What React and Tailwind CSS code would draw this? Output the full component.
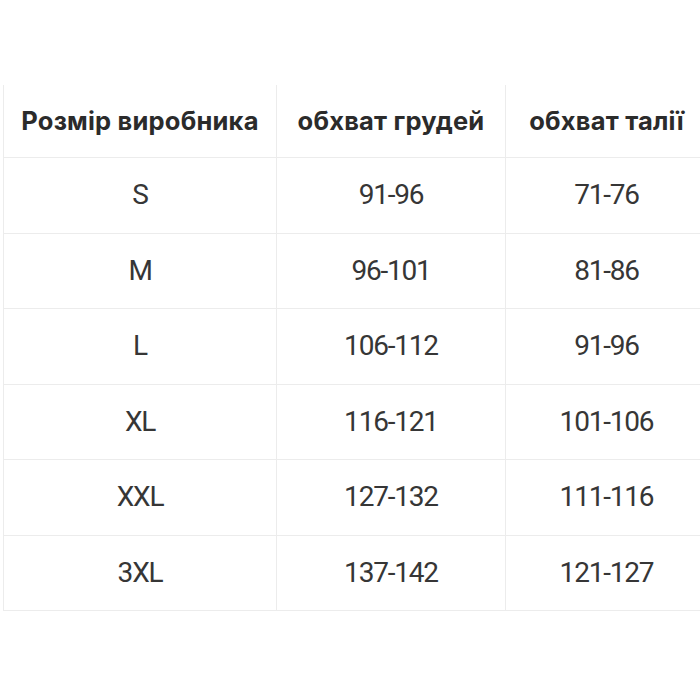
const header = ["Розмір виробника", "обхват грудей", "обхват талії"];

const rows = [
  ["S", "91-96", "71-76"],
  ["M", "96-101", "81-86"],
  ["L", "106-112", "91-96"],
  ["XL", "116-121", "101-106"],
  ["XXL", "127-132", "111-116"],
  ["3XL", "137-142", "121-127"],
];

export default function App() {
  return (
    <div className="w-[700px] h-[700px] overflow-hidden bg-white pt-[85px]">
      <div className="ml-[3px] w-[704px] grid grid-cols-[273px_229px_202px] border-l border-[#ececec]">
        {header.map((h) => (
          <div
            key={h}
            className="h-[73px] flex items-center justify-center border-r border-b border-[#ececec] text-[25.5px] font-bold text-[#2b2b2b] tracking-[0.2px]"
            style={{ fontFamily: "Inter, 'Noto Sans', sans-serif" }}
          >
            {h}
          </div>
        ))}
        {rows.map((r) =>
          r.map((c, i) => (
            <div
              key={r[0] + i}
              className="h-[75.5px] flex items-center justify-center border-r border-b border-[#ececec] text-[28px] text-[#363636] tracking-[-1.2px]"
              style={{ fontFamily: "Roboto, 'Liberation Sans', sans-serif" }}
            >
              {c}
            </div>
          )),
        )}
      </div>
    </div>
  );
}
